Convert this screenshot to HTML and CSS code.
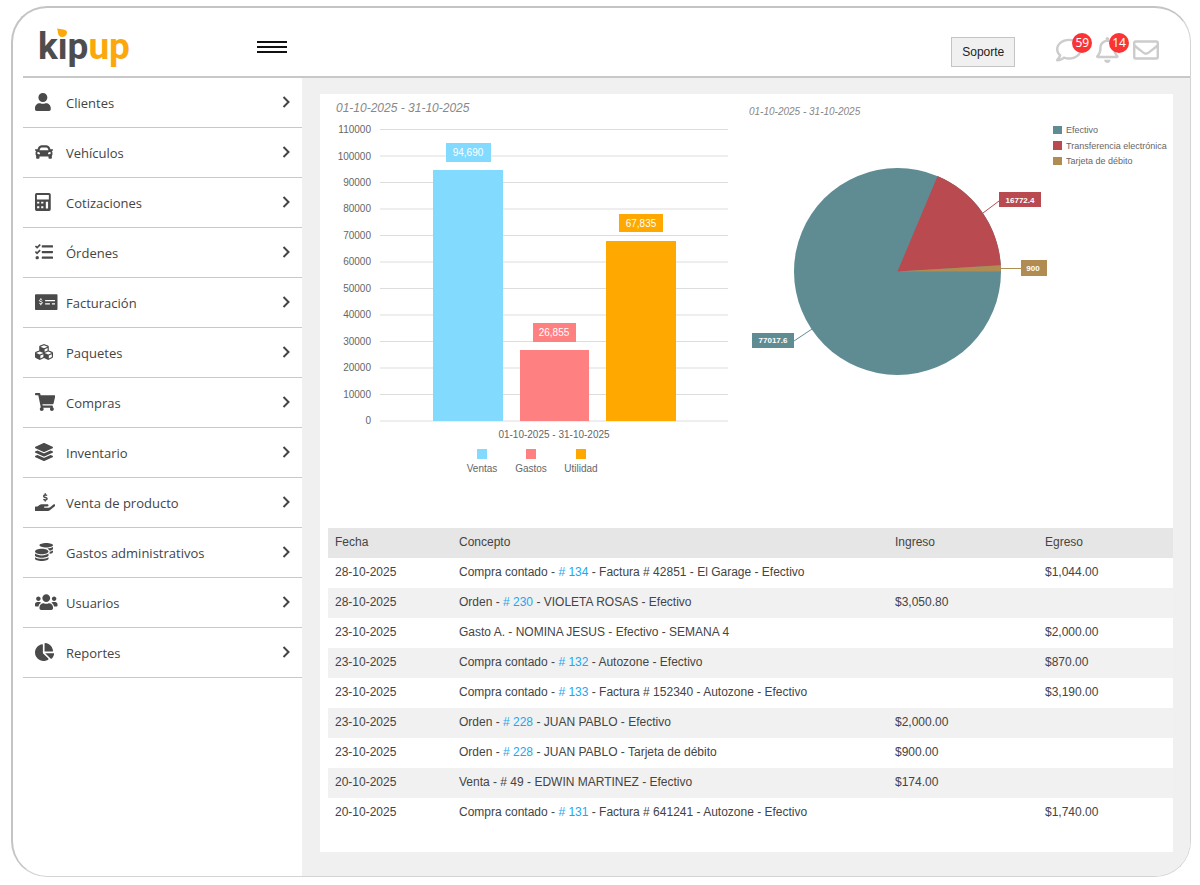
FILE: index.html
```html
<!DOCTYPE html>
<html lang="es">
<head>
<meta charset="utf-8">
<meta name="viewport" content="width=device-width, initial-scale=1">
<title>kipup</title>
<link rel="stylesheet" href="styles.css">
</head>
<body>
<div class="frame">
  <header class="topbar">
    <div class="brand">
      <a class="logo" href="#">kip<span class="logo-accent">up</span><svg class="logo-leaf" viewBox="0 0 12 11" aria-hidden="true"><path class="leaf-back" d="M0 0h12v11H0z"/><path d="M1 .5C5 1.500 11 1 11 4.500 10.800 7.500 8.500 9 6.200 9 3.500 9 2.200 7 2 5 1.900 3.200 1.500 1.800 1 .5z"/></svg></a>
      <button class="burger" type="button" aria-label="Menú"><span></span><span></span><span></span></button>
    </div>
    <div class="tools">
      <button class="support" type="button">Soporte</button>
      <div class="alerts">
        <button class="alert" type="button" aria-label="Mensajes"><svg viewBox="0 0 512 512"><path d="M256 32C114.600 32 0 125.100 0 240c0 47.600 19.900 91.200 52.900 126.300C38 405.700 7 439.100 6.500 439.500c-6.600 7-8.400 17.200-4.600 26S14.400 480 24 480c61.500 0 110-25.700 139.100-46.300C192 442.800 223.200 448 256 448c141.400 0 256-93.100 256-208S397.400 32 256 32zm0 368c-26.700 0-53.100-4.100-78.400-12.100l-22.700-7.200-19.500 13.800c-14.300 10.100-33.900 21.400-57.500 29 7.300-12.100 14.400-25.700 19.900-40.200l10.600-28.100-20.600-21.800C69.700 314.100 48 282.200 48 240c0-88.200 93.300-160 208-160s208 71.800 208 160-93.300 160-208 160z"/></svg><span class="badge">59</span></button>
        <button class="alert" type="button" aria-label="Notificaciones"><svg viewBox="0 0 448 512"><path d="M439.390 362.290c-19.320-20.760-55.470-51.990-55.470-154.290 0-77.700-54.480-139.900-127.940-155.160V32c0-17.670-14.320-32-31.980-32s-31.980 14.330-31.980 32v20.840C118.560 68.100 64.080 130.300 64.080 208c0 102.300-36.150 133.530-55.470 154.290-6 6.450-8.660 14.160-8.610 21.710.11 16.400 12.980 32 32.100 32h383.800c19.120 0 32-15.600 32.100-32 .05-7.550-2.610-15.270-8.610-21.710zM67.530 368c21.220-27.970 44.420-74.330 44.530-159.420 0-.2-.06-.38-.06-.58 0-61.860 50.140-112 112-112s112 50.140 112 112c0 .2-.06.38-.06.58.11 85.100 23.310 131.460 44.530 159.420H67.530zM224 512c35.320 0 63.970-28.650 63.970-64H160.030c0 35.350 28.650 64 63.970 64z"/></svg><span class="badge">14</span></button>
        <button class="alert" type="button" aria-label="Correo"><svg viewBox="0 0 512 512"><path d="M464 64H48C21.490 64 0 85.490 0 112v288c0 26.510 21.490 48 48 48h416c26.510 0 48-21.490 48-48V112c0-26.510-21.490-48-48-48zm0 48v40.805c-22.422 18.259-58.168 46.651-134.587 106.490-16.841 13.247-50.201 45.072-73.413 44.701-23.208.375-56.579-31.459-73.413-44.701C106.180 199.465 70.425 171.067 48 152.805V112h416zM48 400V214.398c22.914 18.251 55.409 43.862 104.938 82.646 21.857 17.205 60.134 55.186 103.062 54.955 42.717.231 80.509-37.199 103.053-54.947 49.528-38.783 82.032-64.401 104.947-82.653V400H48z"/></svg></button>
      </div>
    </div>
  </header>

  <div class="layout">
    <nav class="sidebar">
      <a class="item" href="#"><svg class="icon" viewBox="0 0 448 512"><path d="M224 256c70.700 0 128-57.300 128-128S294.700 0 224 0 96 57.300 96 128s57.300 128 128 128zm89.600 32h-16.700c-22.200 10.200-46.900 16-72.900 16s-50.600-5.800-72.900-16h-16.700C60.200 288 0 348.200 0 422.400V464c0 26.500 21.500 48 48 48h352c26.500 0 48-21.500 48-48v-41.600c0-74.200-60.200-134.400-134.400-134.400z"/></svg><span class="label">Clientes</span><svg class="chevron" viewBox="0 0 8 12"><path d="M1.500 1l5 5-5 5"/></svg></a>
      <a class="item" href="#"><svg class="icon" viewBox="0 0 512 512"><path d="M499.990 176h-59.870l-16.640-41.600C406.380 91.630 365.570 64 319.500 64h-127c-46.060 0-86.880 27.630-103.990 70.400L71.870 176H12.010C4.200 176-1.530 183.340.37 190.910l6 24C7.700 220.250 12.500 224 18.010 224h20.070C24.650 235.730 16 252.780 16 272v48c0 16.120 6.160 30.670 16 41.930V416c0 17.670 14.330 32 32 32h32c17.670 0 32-14.330 32-32v-32h256v32c0 17.670 14.330 32 32 32h32c17.670 0 32-14.330 32-32v-54.070c9.840-11.250 16-25.800 16-41.930v-48c0-19.220-8.650-36.270-22.070-48H494c5.510 0 10.310-3.750 11.640-9.090l6-24c1.890-7.570-3.840-14.910-11.650-14.910zm-352.060-17.830c7.290-18.220 24.940-30.170 44.570-30.170h127c19.630 0 37.280 11.950 44.570 30.170L384 208H128l19.930-49.830zM96 319.800c-19.200 0-32-12.760-32-31.900S76.800 256 96 256s48 28.710 48 47.850-28.800 15.950-48 15.950zm320 0c-19.200 0-48 3.190-48-15.950S396.800 256 416 256s32 12.760 32 31.900-12.800 31.900-32 31.900z"/></svg><span class="label">Vehículos</span><svg class="chevron" viewBox="0 0 8 12"><path d="M1.500 1l5 5-5 5"/></svg></a>
      <a class="item" href="#"><svg class="icon" viewBox="0 0 448 512"><path fill-rule="evenodd" d="M48 0h352a48 48 0 0 1 48 48v416a48 48 0 0 1-48 48H48a48 48 0 0 1-48-48V48A48 48 0 0 1 48 0zM54 54v128h340V54zM60 246v54h62v-54zM176 246v54h62v-54zM60 378v54h62v-54zM176 378v54h62v-54zM308 246v196h64V246z"/></svg><span class="label">Cotizaciones</span><svg class="chevron" viewBox="0 0 8 12"><path d="M1.500 1l5 5-5 5"/></svg></a>
      <a class="item" href="#"><svg class="icon" viewBox="0 0 512 512"><path d="M139.610 35.500a12 12 0 0 0-17 0L58.930 98.810l-22.700-22.120a12 12 0 0 0-17 0L3.530 92.410a12 12 0 0 0 0 17l47.590 47.400a12.780 12.780 0 0 0 17.610 0l15.590-15.620L156.520 69a12.090 12.090 0 0 0 .09-17zm0 159.190a12 12 0 0 0-17 0l-63.680 63.720-22.700-22.100a12 12 0 0 0-17 0L3.530 252a12 12 0 0 0 0 17L51 316.500a12.770 12.770 0 0 0 17.600 0l15.700-15.690 72.200-72.220a12 12 0 0 0 .09-16.900zM64 368c-26.490 0-48.590 21.500-48.590 48S37.530 464 64 464a48 48 0 0 0 0-96zm432 16H208a16 16 0 0 0-16 16v32a16 16 0 0 0 16 16h288a16 16 0 0 0 16-16v-32a16 16 0 0 0-16-16zm0-320H208a16 16 0 0 0-16 16v32a16 16 0 0 0 16 16h288a16 16 0 0 0 16-16V80a16 16 0 0 0-16-16zm0 160H208a16 16 0 0 0-16 16v32a16 16 0 0 0 16 16h288a16 16 0 0 0 16-16v-32a16 16 0 0 0-16-16z"/></svg><span class="label">Órdenes</span><svg class="chevron" viewBox="0 0 8 12"><path d="M1.500 1l5 5-5 5"/></svg></a>
      <a class="item" href="#"><svg class="icon" viewBox="0 0 640 512"><path fill-rule="evenodd" d="M24 32h592a24 24 0 0 1 24 24v400a24 24 0 0 1-24 24H24a24 24 0 0 1-24-24V56a24 24 0 0 1 24-24zM288 200v36h280v-36zM288 288v36h136v-36zM480 288v36h88v-36z"/><path class="cutline" d="M205 204c-10-20-80-22-80 12 0 42 85 18 85 64 0 38-76 34-88 8M166 150v34M166 310v38"/></svg><span class="label">Facturación</span><svg class="chevron" viewBox="0 0 8 12"><path d="M1.500 1l5 5-5 5"/></svg></a>
      <a class="item" href="#"><svg class="icon" viewBox="0 0 512 512"><path d="M488.600 250.200L392 214V105.500c0-15-9.300-28.400-23.400-33.700l-100-37.500c-8.100-3.100-17.100-3.100-25.300 0l-100 37.500c-14.100 5.300-23.400 18.700-23.400 33.700V214l-96.600 36.200C9.300 255.500 0 268.900 0 283.900V394c0 13.600 7.700 26.100 19.900 32.200l100 50c10.100 5.100 22.100 5.100 32.200 0l103.900-52 103.900 52c10.100 5.100 22.100 5.100 32.200 0l100-50c12.200-6.100 19.900-18.600 19.900-32.200V283.900c0-15-9.300-28.400-23.400-33.700zM358 214.800l-85 31.900v-68.200l85-37v73.300zM154 104.100l102-38.200 102 38.200v.6l-102 41.400-102-41.400v-.6zm84 291.100l-85 42.500v-79.100l85-38.800v75.400zm0-112l-102 41.400-102-41.400v-.6l102-38.200 102 38.200v.6zm240 112l-85 42.500v-79.100l85-38.800v75.400zm0-112l-102 41.400-102-41.400v-.6l102-38.200 102 38.200v.6z"/></svg><span class="label">Paquetes</span><svg class="chevron" viewBox="0 0 8 12"><path d="M1.500 1l5 5-5 5"/></svg></a>
      <a class="item" href="#"><svg class="icon" viewBox="0 0 576 512"><path d="M528.120 301.319l47.273-208C578.806 78.301 567.391 64 551.990 64H159.208l-9.166-44.810C147.758 8.021 137.930 0 126.529 0H24C10.745 0 0 10.745 0 24v16c0 13.255 10.745 24 24 24h69.883l70.248 343.435C147.325 417.100 136 435.222 136 456c0 30.928 25.072 56 56 56s56-25.072 56-56c0-15.674-6.447-29.835-16.824-40h209.647C430.447 426.165 424 440.326 424 456c0 30.928 25.072 56 56 56s56-25.072 56-56c0-22.172-12.888-41.332-31.579-50.405l5.517-24.276c3.413-15.018-8.002-29.319-23.403-29.319H218.117l-6.545-32h293.145c11.206 0 20.920-7.754 23.403-18.681z"/></svg><span class="label">Compras</span><svg class="chevron" viewBox="0 0 8 12"><path d="M1.500 1l5 5-5 5"/></svg></a>
      <a class="item" href="#"><svg class="icon" viewBox="0 0 512 512"><path d="M12.410 148.020l232.940 105.670c6.800 3.090 14.490 3.090 21.290 0l232.940-105.670c16.550-7.510 16.550-32.520 0-40.030L266.650 2.310a25.607 25.607 0 0 0-21.290 0L12.410 107.980c-16.550 7.510-16.550 32.530 0 40.040zm487.180 88.280l-58.090-26.330-161.640 73.270c-7.560 3.430-15.590 5.170-23.860 5.170s-16.290-1.740-23.860-5.170L70.510 209.970l-58.100 26.330c-16.550 7.500-16.550 32.500 0 40l232.940 105.590c6.800 3.080 14.490 3.080 21.290 0L499.590 276.300c16.550-7.500 16.550-32.500 0-40zm0 127.800l-57.870-26.230-161.860 73.370c-7.560 3.430-15.590 5.170-23.860 5.170s-16.290-1.740-23.860-5.170L70.290 337.870 12.410 364.100c-16.550 7.500-16.550 32.500 0 40l232.940 105.590c6.800 3.080 14.490 3.080 21.290 0L499.590 404.100c16.550-7.500 16.550-32.500 0-40z"/></svg><span class="label">Inventario</span><svg class="chevron" viewBox="0 0 8 12"><path d="M1.500 1l5 5-5 5"/></svg></a>
      <a class="item" href="#"><svg class="icon" viewBox="0 0 576 512"><path d="M565.300 328.100c-11.800-10.700-30.200-10-42.600 0L430.300 402c-11.300 9.100-25.400 14-40 14H272c-8.800 0-16-7.200-16-16s7.200-16 16-16h78.300c15.900 0 30.700-10.900 33.300-26.600 3.300-20-12.100-37.400-31.600-37.400H192c-27 0-53.100 9.300-74.100 26.300L71.400 384H16c-8.800 0-16 7.200-16 16v96c0 8.800 7.200 16 16 16h356.800c14.500 0 28.600-4.900 40-14L564 377c15.200-12.100 16.400-35.300 1.300-48.900z"/><path class="line" d="M338 76c-14-26-92-28-92 16 0 48 98 24 98 74 0 44-84 42-100 8M292 4v36M292 204v38"/></svg><span class="label">Venta de producto</span><svg class="chevron" viewBox="0 0 8 12"><path d="M1.500 1l5 5-5 5"/></svg></a>
      <a class="item" href="#"><svg class="icon" viewBox="0 0 512 512"><path d="M0 405.300V448c0 35.300 86 64 192 64s192-28.700 192-64v-42.700C342.700 434.400 267.200 448 192 448S41.300 434.400 0 405.300zM320 128c106 0 192-28.700 192-64S426 0 320 0 128 28.700 128 64s86 64 192 64zM0 300.400V352c0 35.300 86 64 192 64s192-28.700 192-64v-51.600c-41.300 34-116.900 51.600-192 51.600S41.300 334.400 0 300.400zm416 11c57.300-11.100 96-31.700 96-55.400v-42.700c-23.200 16.400-57.300 27.600-96 34.500v63.600zM192 160C86 160 0 195.800 0 240s86 80 192 80 192-35.800 192-80-86-80-192-80zm219.300 56.300c60-10.800 100.700-32 100.700-56.300v-42.700c-35.500 25.100-96.500 38.600-160.700 41.800 29.500 14.300 51.200 33.500 60 57.200z"/></svg><span class="label">Gastos administrativos</span><svg class="chevron" viewBox="0 0 8 12"><path d="M1.500 1l5 5-5 5"/></svg></a>
      <a class="item" href="#"><svg class="icon" viewBox="0 0 640 512"><path d="M96 224c35.300 0 64-28.700 64-64s-28.700-64-64-64-64 28.700-64 64 28.700 64 64 64zm448 0c35.300 0 64-28.700 64-64s-28.700-64-64-64-64 28.700-64 64 28.700 64 64 64zm32 32h-64c-17.600 0-33.500 7.100-45.100 18.600 40.300 22.100 68.900 62 75.100 109.400h66c17.700 0 32-14.300 32-32v-32c0-35.300-28.700-64-64-64zm-256 0c61.900 0 112-50.100 112-112S381.900 32 320 32 208 82.100 208 144s50.100 112 112 112zm76.800 32h-8.300c-20.800 10-43.900 16-68.500 16s-47.600-6-68.500-16h-8.300C179.600 288 128 339.600 128 403.200V432c0 26.500 21.500 48 48 48h288c26.500 0 48-21.500 48-48v-28.800c0-63.600-51.600-115.200-115.200-115.200zm-223.700-13.400C161.500 263.100 145.600 256 128 256H64c-35.300 0-64 28.700-64 64v32c0 17.700 14.300 32 32 32h65.900c6.300-47.400 34.900-87.300 75.200-109.400z"/></svg><span class="label">Usuarios</span><svg class="chevron" viewBox="0 0 8 12"><path d="M1.500 1l5 5-5 5"/></svg></a>
      <a class="item" href="#"><svg class="icon" viewBox="0 0 544 512"><path d="M527.790 288H290.500l158.030 158.030c6.040 6.040 15.980 6.530 22.190.68 38.700-36.460 65.320-85.610 73.130-140.860 1.340-9.460-6.510-17.850-16.060-17.850zm-15.830-64.800C503.720 103.740 408.260 8.280 288.800.04 279.680-.59 272 7.100 272 16.240V240h223.770c9.140 0 16.820-7.680 16.190-16.800zM224 288V50.710c0-9.550-8.390-17.400-17.840-16.060C86.990 51.490-4.100 155.600.14 280.370 4.500 408.510 114.830 513.590 243.030 511.980c50.400-.63 96.970-16.870 135.260-44.030 7.900-5.600 8.420-17.230 1.570-24.080L224 288z"/></svg><span class="label">Reportes</span><svg class="chevron" viewBox="0 0 8 12"><path d="M1.500 1l5 5-5 5"/></svg></a>
    </nav>

    <main class="main">
      <div class="panel">
        <div class="charts">
          <svg class="chart" viewBox="0 0 420 434" role="img" aria-label="Ventas, gastos y utilidad">
            <text class="title-large" x="16" y="18">01-10-2025 - 31-10-2025</text>
            <path class="grid" d="M60 35.500h348M60 62h348M60 88.500h348M60 115h348M60 141.500h348M60 168h348M60 194.500h348M60 221h348M60 247.500h348M60 274h348M60 300.500h348M60 327h348"/>
            <g class="axis">
              <text x="51" y="39">110000</text><text x="51" y="66">100000</text><text x="51" y="92">90000</text><text x="51" y="118">80000</text><text x="51" y="145">70000</text><text x="51" y="171">60000</text><text x="51" y="198">50000</text><text x="51" y="224">40000</text><text x="51" y="251">30000</text><text x="51" y="277">20000</text><text x="51" y="304">10000</text><text x="51" y="330">0</text>
            </g>
            <g class="sales"><path d="M113 76h70v251h-70zM126 49h45v19h-45zM157 355h10v10h-10z"/></g>
            <g class="costs"><path d="M200 256h69v71h-69zM213 229h43v19h-43zM206 355h10v10h-10z"/></g>
            <g class="profit"><path d="M286 147h70v180h-70zM299 120h44v18h-44zM256 355h10v10h-10z"/></g>
            <g class="values"><text x="148" y="62">94,690</text><text x="234" y="242">26,855</text><text x="321" y="133">67,835</text></g>
            <g class="caption"><text x="234" y="344">01-10-2025 - 31-10-2025</text><text x="162" y="378">Ventas</text><text x="211" y="378">Gastos</text><text x="261" y="378">Utilidad</text></g>
          </svg>
          <svg class="chart" viewBox="0 0 433 434" role="img" aria-label="Formas de pago">
            <text class="title-small" x="9" y="21">01-10-2025 - 31-10-2025</text>
            <g class="cash"><circle cx="157.500" cy="177.500" r="103.500"/><path d="M12 239h42v15H12zM313 32h9v8h-9z"/><path class="leader" d="M54 247l18-12"/></g>
            <g class="transfer"><path d="M157.500 177.500L197.600 82.100A103.500 103.500 0 0 1 260.800 171.300zM259 98h42v15h-42zM313 47h9v9h-9z"/><path class="leader" d="M243 119l16-12"/></g>
            <g class="card"><path d="M157.500 177.500L260.800 171.300A103.500 103.500 0 0 1 261 177.500zM281 166h26v16h-26zM313 63h9v8h-9z"/><path class="leader" d="M261 174.500h20"/></g>
            <g class="slices"><text x="280" y="109">16772.4</text><text x="293" y="177">900</text><text x="33" y="249">77017.6</text></g>
            <g class="legend"><text x="326" y="39">Efectivo</text><text x="326" y="55">Transferencia electrónica</text><text x="326" y="70">Tarjeta de débito</text></g>
          </svg>
        </div>
        <table class="moves">
          <thead><tr><th class="date">Fecha</th><th>Concepto</th><th class="income">Ingreso</th><th class="expense">Egreso</th></tr></thead>
          <tbody>
            <tr><td>28-10-2025</td><td>Compra contado - <a href="#"># 134</a> - Factura # 42851 - El Garage - Efectivo</td><td></td><td>$1,044.00</td></tr>
            <tr><td>28-10-2025</td><td>Orden - <a href="#"># 230</a> - VIOLETA ROSAS - Efectivo</td><td>$3,050.80</td><td></td></tr>
            <tr><td>23-10-2025</td><td>Gasto A. - NOMINA JESUS - Efectivo - SEMANA 4</td><td></td><td>$2,000.00</td></tr>
            <tr><td>23-10-2025</td><td>Compra contado - <a href="#"># 132</a> - Autozone - Efectivo</td><td></td><td>$870.00</td></tr>
            <tr><td>23-10-2025</td><td>Compra contado - <a href="#"># 133</a> - Factura # 152340 - Autozone - Efectivo</td><td></td><td>$3,190.00</td></tr>
            <tr><td>23-10-2025</td><td>Orden - <a href="#"># 228</a> - JUAN PABLO - Efectivo</td><td>$2,000.00</td><td></td></tr>
            <tr><td>23-10-2025</td><td>Orden - <a href="#"># 228</a> - JUAN PABLO - Tarjeta de débito</td><td>$900.00</td><td></td></tr>
            <tr><td>20-10-2025</td><td>Venta - # 49 - EDWIN MARTINEZ - Efectivo</td><td>$174.00</td><td></td></tr>
            <tr><td>20-10-2025</td><td>Compra contado - <a href="#"># 131</a> - Factura # 641241 - Autozone - Efectivo</td><td></td><td>$1,740.00</td></tr>
          </tbody>
        </table>
      </div>
    </main>
  </div>
</div>
</body>
</html>
```
FILE: styles.css
```css
* { box-sizing: border-box; }

body {
  margin: 0;
  padding: 6px 9px 8px 11px;
  background: #fff;
  color: #444;
  font-family: "Liberation Sans", Arial, sans-serif;
}

button { font: inherit; cursor: pointer; }
a { text-decoration: none; }

.frame {
  overflow: hidden;
  border: 2px solid #c4c4c4;
  border-right: 1px solid #d4d4d4;
  border-bottom: 1px solid #d4d4d4;
  border-radius: 36px;
}

/* Top bar */
.topbar {
  display: flex;
  justify-content: space-between;
  height: 70px;
  margin-left: 10px;
  border-bottom: 2px solid #c8c8c8;
}

.brand {
  display: flex;
  align-items: center;
  justify-content: space-between;
  width: 279px;
  padding: 10px 15px 0 15px;
}

.logo {
  position: relative;
  color: #4d4d4d;
  font-family: Roboto, sans-serif;
  font-size: 37px;
  font-weight: bold;
  line-height: 48px;
}

.logo-accent { color: #fca80c; }

.logo-leaf {
  position: absolute;
  top: 5px;
  left: 18px;
  width: 12px;
  height: 11px;
  fill: #fca80c;
}

.leaf-back { fill: #fff; }

.burger {
  display: flex;
  flex-direction: column;
  gap: 3px;
  width: 30px;
  padding: 0;
  border: 0;
  background: none;
}

.burger span { width: 30px; height: 2px; background: #111; }

.tools {
  display: flex;
  align-items: center;
  gap: 41px;
  padding: 16px 31px 0 0;
}

.support {
  height: 30px;
  margin-top: 4px;
  padding: 0 10px;
  border: 1px solid #c4c4c4;
  background: #f0f0f0;
  color: #222;
  font-size: 12px;
}

.alerts { display: flex; gap: 14px; }

.alert {
  position: relative;
  display: flex;
  padding: 0;
  border: 0;
  background: none;
}

.alert svg { height: 26px; fill: #ccc; }

.badge {
  position: absolute;
  top: -4px;
  right: -10px;
  width: 20px;
  height: 20px;
  border-radius: 50%;
  background: #fa3434;
  color: #fff;
  font: 12px/20px "Noto Sans", sans-serif;
  text-align: center;
}

/* Side menu */
.layout { display: flex; margin-left: 10px; }

.sidebar { flex: none; width: 279px; }

.item {
  display: flex;
  align-items: center;
  height: 50px;
  padding: 0 12px;
  border-bottom: 1px solid #c8c8c8;
  color: #444;
  font-family: "Open Sans", "Noto Sans", sans-serif;
  font-size: 13px;
}

.icon { height: 18px; margin-bottom: 2px; fill: #4a4a4a; }
.icon .cutline { fill: none; stroke: #fff; stroke-width: 28; }
.icon .line { fill: none; stroke: #4a4a4a; stroke-width: 40; }

.label { margin-left: auto; width: 200px; }

.chevron {
  width: 8px;
  height: 12px;
  margin: 0 0 2px 16px;
  fill: none;
  stroke: #444;
  stroke-width: 2;
}

/* Main */
.main {
  flex: 1;
  min-width: 0;
  padding: 16px 17px 24px 18px;
  background: #f0f0f0;
}

.panel { padding-bottom: 24px; background: #fff; }

.charts { display: grid; grid-template-columns: 420fr 433fr; }

.chart { display: block; width: 100%; font-size: 10px; fill: #666; }

.title-large, .title-small { font-style: italic; fill: #888; }
.title-large { font-size: 12px; }

.grid { stroke: #ddd; }
.axis { text-anchor: end; }
.caption, .values, .slices { text-anchor: middle; }
.values, .slices { fill: #fff; }
.slices { font-size: 8px; font-weight: bold; }
.legend { font-size: 9px; }

.sales { fill: #82daff; }
.costs { fill: #ff8080; }
.profit { fill: #ffa800; }
.cash { fill: #5f8b93; stroke: #5f8b93; stroke-width: 0; }
.transfer { fill: #b94a4f; stroke: #b94a4f; stroke-width: 0; }
.card { fill: #b08c52; stroke: #b08c52; stroke-width: 0; }
.leader { stroke-width: 1; }

/* Movements */
.moves {
  width: calc(100% - 8px);
  margin-left: 8px;
  border-collapse: collapse;
  table-layout: fixed;
  font-size: 12px;
  line-height: 14px;
}

.moves th, .moves td {
  height: 30px;
  padding: 0 7px 2px;
  font-weight: normal;
  text-align: left;
}

.moves thead { background: #e6e6e6; }
.moves tbody tr:nth-child(even) { background: #f1f1f1; }
.moves a { color: #1ba8f0; }
.date { width: 124px; }
.income { width: 150px; }
.expense { width: 135px; }
```
